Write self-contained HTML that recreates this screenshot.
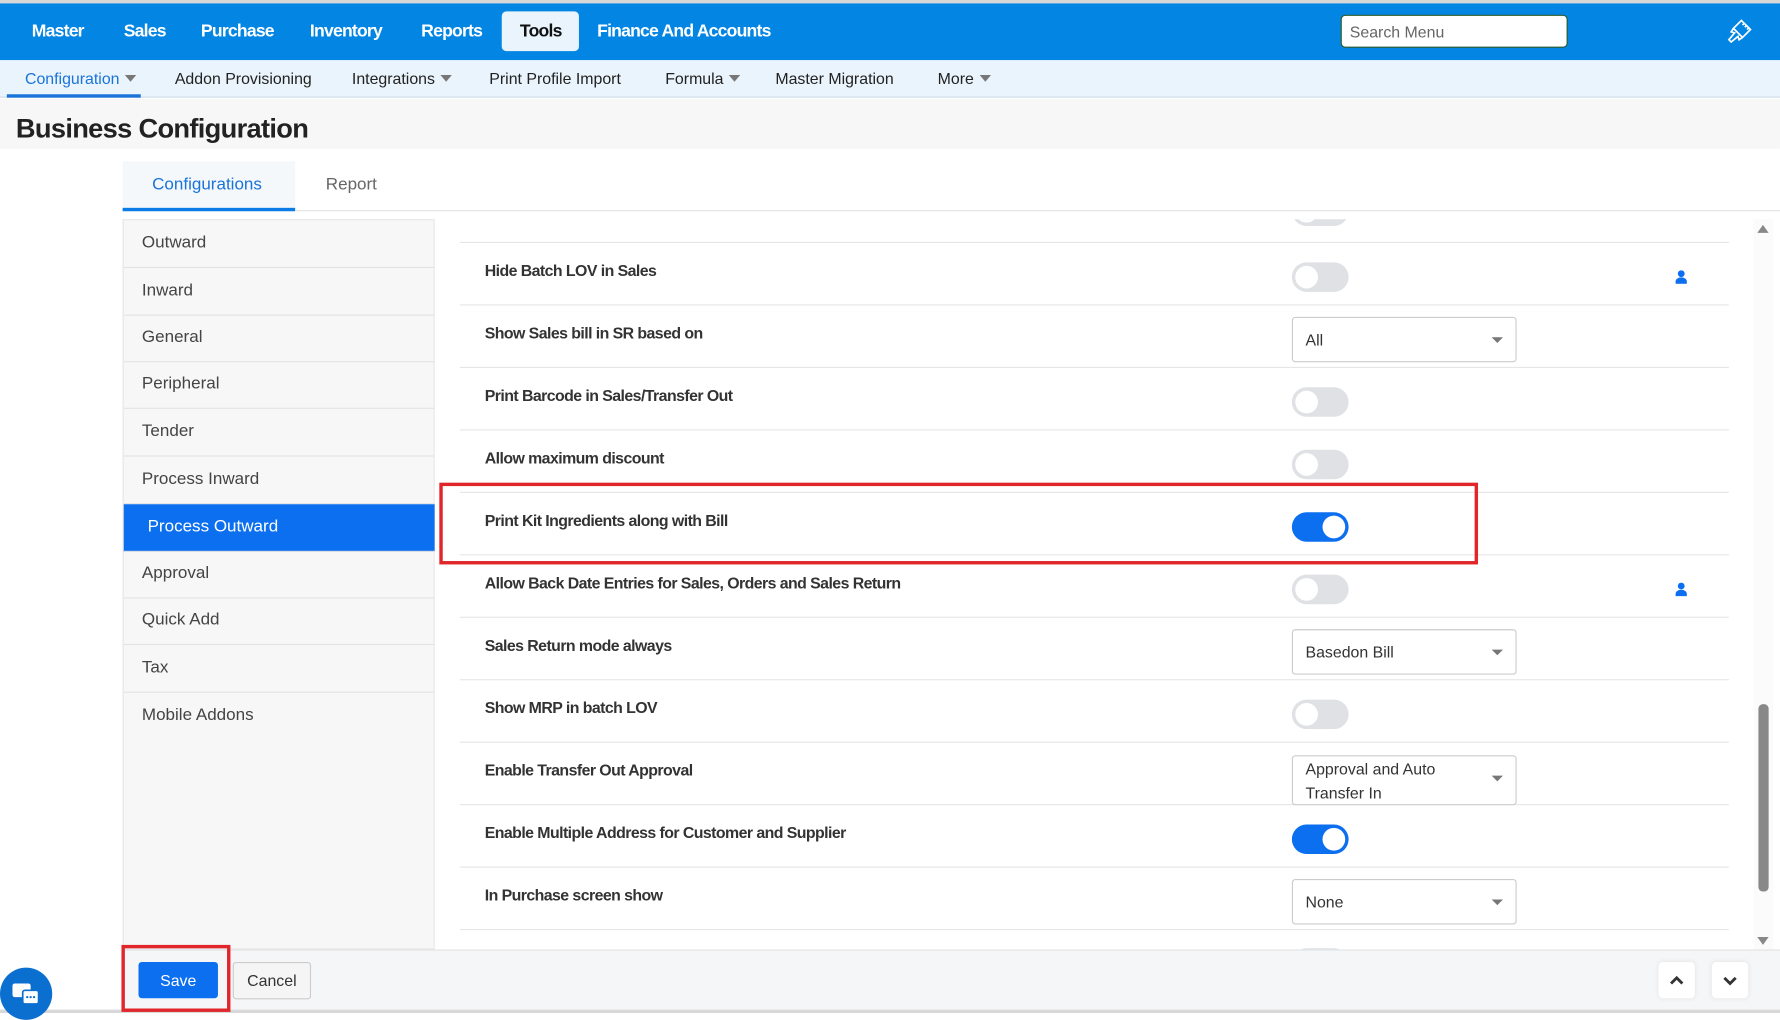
<!DOCTYPE html>
<html><head><meta charset="utf-8"><style>
*{box-sizing:border-box;margin:0;padding:0}
html,body{width:1780px;height:1013px;overflow:hidden;background:#fff;font-family:"Liberation Sans",sans-serif}
#w{position:absolute;left:0;top:0;width:1568px;height:892px;transform:scale(1.1352,1.1357);transform-origin:0 0;background:#fff}
.a{position:absolute}
.nav{color:#fff;font-weight:bold;font-size:15.5px;top:19px;letter-spacing:-0.7px}
.sub{font-size:14px;top:61px;color:#222}
.car{display:inline-block;width:0;height:0;border-left:5px solid transparent;border-right:5px solid transparent;border-top:6px solid #777;margin-left:5px;vertical-align:2px}
.li{position:absolute;left:0;width:274px;height:42px;font-size:15px;color:#444;padding-left:16px;line-height:40px;border-bottom:1px solid #e3e3e3}
.row{position:absolute;left:22px;width:1118px;height:55px;border-bottom:1px solid #e6e6e6}
.lab{position:absolute;left:22px;top:16px;font-size:14px;font-weight:bold;color:#333;letter-spacing:-0.5px}
.tg{position:absolute;left:733px;top:17px;width:50px;height:26px;border-radius:13px;background:#dfe1e5}
.tg::after{content:"";position:absolute;left:3px;top:3px;width:20px;height:20px;border-radius:50%;background:#fff}
.tg.on{background:#0b6ff0}.tg.on::after{left:27px}
.dd{position:absolute;left:733px;top:10px;width:198px;height:40px;border:1px solid #ccc;border-radius:3px;font-size:14px;color:#333;padding:11px 11px;background:#fff}
.dd::after{content:"";position:absolute;right:11px;top:17px;border-left:5px solid transparent;border-right:5px solid transparent;border-top:5px solid #777}
.pi{position:absolute;left:1071px;top:24px;width:10px;height:12px}
</style></head><body><div id="w">
<div class="a" style="left:0;top:0;width:1568px;height:3px;background:#d8d8d8"></div>
<div class="a" style="left:0;top:3px;width:1568px;height:50px;background:#0385e3"></div>
<div class="a nav" style="left:28px">Master</div>
<div class="a nav" style="left:109px">Sales</div>
<div class="a nav" style="left:177px">Purchase</div>
<div class="a nav" style="left:273px">Inventory</div>
<div class="a nav" style="left:371px">Reports</div>
<div class="a" style="left:442px;top:10px;width:68px;height:35px;background:#eaf4fc;border-radius:4px"></div>
<div class="a nav" style="left:458px;color:#111">Tools</div>
<div class="a nav" style="left:526px">Finance And Accounts</div>
<div class="a" style="left:1181px;top:13px;width:200px;height:29px;background:#fff;border:1px solid #2a5a2a;border-radius:4px;font-size:14px;color:#666;padding:6px 7px">Search Menu</div>
<svg class="a" style="left:1520px;top:16px" width="24" height="24" viewBox="0 0 24 24" fill="none" stroke="#fff" stroke-width="1.5"><path d="M14 2l8 8-7 7-8-8z M7 9l-2 3 3 1 -5 6 2 2 6-5 1 3 3-2 M16 5l-1 1 M18 7l-1 1 M20 9l-1 1"/></svg>
<div class="a" style="left:0;top:53px;width:1568px;height:33px;background:#eaf4fc;border-bottom:1px solid #cfdbe6"></div>
<div class="a sub" style="left:22px;color:#1a73d9">Configuration<span class="car"></span></div>
<div class="a" style="left:6px;top:83px;width:118px;height:3px;background:#1a73d9"></div>
<div class="a sub" style="left:154px">Addon Provisioning</div>
<div class="a sub" style="left:310px">Integrations<span class="car"></span></div>
<div class="a sub" style="left:431px">Print Profile Import</div>
<div class="a sub" style="left:586px">Formula<span class="car"></span></div>
<div class="a sub" style="left:683px">Master Migration</div>
<div class="a sub" style="left:826px">More<span class="car"></span></div>
<div class="a" style="left:0;top:87px;width:1568px;height:44px;background:#f7f7f7"></div>
<div class="a" style="left:14px;top:100px;font-size:24px;font-weight:bold;color:#222;letter-spacing:-0.6px">Business Configuration</div>
<div class="a" style="left:108px;top:142px;width:152px;height:44px;background:#f5f8fb;border-bottom:3px solid #0b7be6"></div>
<div class="a" style="left:134px;top:154px;font-size:15px;color:#1a73d9">Configurations</div>
<div class="a" style="left:287px;top:154px;font-size:15px;color:#666">Report</div>
<div class="a" style="left:260px;top:185px;width:1308px;height:1px;background:#e3e3e3"></div>
<div class="a" style="left:108px;top:193px;width:275px;height:643px;background:#f7f7f7;border:1px solid #e6e6e6">
<div class="li" style="top:0">Outward</div>
<div class="li" style="top:42px">Inward</div>
<div class="li" style="top:83px">General</div>
<div class="li" style="top:124px">Peripheral</div>
<div class="li" style="top:166px">Tender</div>
<div class="li" style="top:208px">Process Inward</div>
<div class="li" style="top:250px;background:#0b6ff0;color:#fff;padding-left:21px">Process Outward</div>
<div class="li" style="top:291px">Approval</div>
<div class="li" style="top:332px">Quick Add</div>
<div class="li" style="top:374px">Tax</div>
<div class="li" style="top:416px;border:none">Mobile Addons</div>
</div>
<div class="a" style="left:383px;top:193px;width:1162px;height:643px;overflow:hidden;background:#fff">
<div class="row" style="top:-34px"><div class="tg" style="top:14px"></div><div class="a" style="left:1092px;top:30px;width:10px;height:3px;background:#0b6ff0"></div></div>
<div class="row" style="top:21px"><div class="lab">Hide Batch LOV in Sales</div><div class="tg"></div><svg class="pi" viewBox="0 0 10 12"><circle cx="5" cy="3" r="3" fill="#0b6ff0"/><path d="M0 12v-2a4 3 0 0 1 10 0v2z" fill="#0b6ff0"/></svg></div>
<div class="row" style="top:76px"><div class="lab">Show Sales bill in SR based on</div><div class="dd">All</div></div>
<div class="row" style="top:131px"><div class="lab">Print Barcode in Sales/Transfer Out</div><div class="tg"></div></div>
<div class="row" style="top:186px"><div class="lab">Allow maximum discount</div><div class="tg"></div></div>
<div class="row" style="top:241px"><div class="lab">Print Kit Ingredients along with Bill</div><div class="tg on"></div></div>
<div class="row" style="top:296px"><div class="lab">Allow Back Date Entries for Sales, Orders and Sales Return</div><div class="tg"></div><svg class="pi" viewBox="0 0 10 12"><circle cx="5" cy="3" r="3" fill="#0b6ff0"/><path d="M0 12v-2a4 3 0 0 1 10 0v2z" fill="#0b6ff0"/></svg></div>
<div class="row" style="top:351px"><div class="lab">Sales Return mode always</div><div class="dd">Basedon Bill</div></div>
<div class="row" style="top:406px"><div class="lab">Show MRP in batch LOV</div><div class="tg"></div></div>
<div class="row" style="top:461px"><div class="lab">Enable Transfer Out Approval</div><div class="dd" style="top:11px;height:44px;padding:1px 11px;line-height:21px">Approval and Auto<br>Transfer In</div></div>
<div class="row" style="top:516px"><div class="lab">Enable Multiple Address for Customer and Supplier</div><div class="tg on"></div></div>
<div class="row" style="top:571px"><div class="lab">In Purchase screen show</div><div class="dd">None</div></div>
<div class="row" style="top:626px;border:none"><div class="tg" style="top:16px"></div></div>
</div>
<div class="a" style="left:1545px;top:193px;width:17px;height:643px;background:#fbfbfb"></div>
<div class="a" style="left:1548px;top:198px;border-left:5px solid transparent;border-right:5px solid transparent;border-bottom:7px solid #888"></div>
<div class="a" style="left:1548px;top:825px;border-left:5px solid transparent;border-right:5px solid transparent;border-top:7px solid #888"></div>
<div class="a" style="left:1549px;top:620px;width:9px;height:165px;background:#888;border-radius:4px"></div>
<div class="a" style="left:387px;top:425px;width:915px;height:72px;border:3px solid #e0262b"></div>
<div class="a" style="left:108px;top:836px;width:1460px;height:53px;background:#f5f6f8;border-top:1px solid #e3e3e3"></div>
<div class="a" style="left:0;top:889px;width:1568px;height:3px;background:#d8d8d8"></div>
<div class="a" style="left:122px;top:847px;width:70px;height:32px;background:#0b6ff0;border-radius:3px;color:#fff;font-size:14px;text-align:center;line-height:32px">Save</div>
<div class="a" style="left:107px;top:832px;width:96px;height:59px;border:3px solid #e0262b"></div>
<div class="a" style="left:205px;top:847px;width:69px;height:33px;background:#f5f5f5;border:1px solid #ccc;border-radius:3px;color:#333;font-size:14px;text-align:center;line-height:31px">Cancel</div>
<div class="a" style="left:0;top:852px;width:46px;height:46px;border-radius:50%;background:#0b6fd0"></div>
<svg class="a" style="left:10px;top:864px" width="28" height="24" viewBox="0 0 28 24"><rect x="1" y="2" width="16" height="12" rx="2" fill="#fff"/><rect x="10" y="8" width="14" height="12" rx="2" fill="#fff" stroke="#0b6fd0" stroke-width="1.5"/><circle cx="14" cy="14" r="1" fill="#0b6fd0"/><circle cx="17" cy="14" r="1" fill="#0b6fd0"/><circle cx="20" cy="14" r="1" fill="#0b6fd0"/></svg>
<div class="a" style="left:1461px;top:847px;width:32px;height:32px;background:#fff;border-radius:4px;box-shadow:0 0 4px #e3e3e3"></div>
<div class="a" style="left:1508px;top:847px;width:32px;height:32px;background:#fff;border-radius:4px;box-shadow:0 0 4px #e3e3e3"></div>
<svg class="a" style="left:1469px;top:856px" width="16" height="14" viewBox="0 0 16 14"><path d="M3 10l5-5 5 5" fill="none" stroke="#333" stroke-width="2.5"/></svg>
<svg class="a" style="left:1516px;top:856px" width="16" height="14" viewBox="0 0 16 14"><path d="M3 5l5 5 5-5" fill="none" stroke="#333" stroke-width="2.5"/></svg>
</div></body></html>
